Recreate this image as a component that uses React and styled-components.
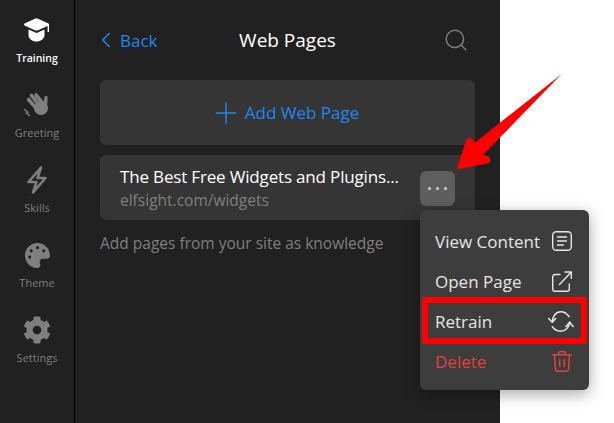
import styled, { createGlobalStyle } from "styled-components";
import { ChevronLeft, Plus, Search } from "lucide-react";
import { FaCog, FaPalette } from "react-icons/fa";

const GlobalStyle = createGlobalStyle`
  html, body {
    margin: 0;
    background: #fff;
    overflow: hidden;
  }
  body {
    font-family: "Open Sans", "Noto Sans", sans-serif;
  }
`;

function CapIcon() {
  return (
    <svg width="27" height="24" viewBox="0 0 27 24" fill="currentColor">
      <path d="M12.5 0.6 Q13.5 0.2 14.5 0.6 L25.5 5.6 Q26.8 6.5 25.5 7.4 L14.5 12.4 Q13.5 12.8 12.5 12.4 L1.5 7.4 Q0.2 6.5 1.5 5.6 Z" />
      <path d="M5.5 11.5 L13.5 15 L21.5 11.5 V17 C21.5 21 17.5 23.5 13.5 23.5 C9.5 23.5 5.5 21 5.5 17 Z" />
      <rect x="24.6" y="7" width="1.4" height="7" />
    </svg>
  );
}

function WaveIcon() {
  return (
    <svg width="28" height="26" viewBox="25 93 28 26" fill="none" stroke="currentColor" strokeLinecap="round">
      <path d="M33.5 96.5 L41 106 M38 96 L44.5 104 M30.5 100.5 L38 109" strokeWidth="3.6" />
      <path d="M48 98.5 L47.5 106" strokeWidth="3.4" />
      <circle cx="43" cy="109" r="7" fill="currentColor" stroke="none" />
      <path d="M26.5 110.5 L30 113.5 M28 114 L31.5 116.5" strokeWidth="1.4" />
    </svg>
  );
}

function BoltIcon() {
  return (
    <svg width="24" height="30" viewBox="26 165 24 30" fill="none" stroke="currentColor" strokeWidth="2.6" strokeLinejoin="round">
      <path d="M42 167.5 L29.5 182 H37.5 L34 192.5 L46.5 178 H38.5 Z" />
    </svg>
  );
}

function ContentIcon() {
  return (
    <svg width="20" height="20" viewBox="0 0 20 20" fill="none" stroke="currentColor" strokeWidth="1.4" strokeLinecap="round">
      <rect x="0.7" y="0.7" width="18.6" height="18.6" rx="3.5" />
      <path d="M5.5 6 H14.5 M5.5 10 H14.5 M5.5 14 H11.5" />
    </svg>
  );
}

function OpenIcon() {
  return (
    <svg width="20" height="21" viewBox="0 0 20 21" fill="none" stroke="currentColor" strokeWidth="1.4" strokeLinecap="round" strokeLinejoin="round">
      <path d="M8 3.5 H3 A2.3 2.3 0 0 0 0.7 5.8 V18 A2.3 2.3 0 0 0 3 20.3 H15 A2.3 2.3 0 0 0 17.3 18 V13" />
      <path d="M7.5 13.5 L19.3 1 M13 1 H19.3 V7.3" />
    </svg>
  );
}

function RetrainIcon() {
  return (
    <svg width="26" height="21" viewBox="0 0 26 21" fill="none" stroke="currentColor" strokeWidth="1.5" strokeLinecap="round" strokeLinejoin="round">
      <path d="M4.3 11 C4.5 5 8 0.8 12.7 0.8 C16 0.8 19 2.6 21 5.7" />
      <path d="M21.7 11 C21.5 16 17.5 20.2 12.7 20.2 C9.2 20.2 6.2 18.6 4.3 15.7" />
      <path d="M0.7 7.5 L4.3 11.3 L7.7 7.5 M18 15.5 L21.7 11.3 L25.2 15.5" />
    </svg>
  );
}

function TrashIcon() {
  return (
    <svg width="20" height="21" viewBox="0 0 20 21" fill="none" stroke="currentColor" strokeWidth="1.5" strokeLinecap="round" strokeLinejoin="round">
      <path d="M0.8 3.8 H19.2 M6.5 3.8 V2.5 Q6.5 0.8 8 0.8 H12 Q13.5 0.8 13.5 2.5 V3.8" />
      <path d="M2.5 3.8 L3.5 18 Q3.7 20.2 5.8 20.2 H14.2 Q16.3 20.2 16.5 18 L17.5 3.8" />
      <path d="M7.7 8.5 V15.5 M12.3 8.5 V15.5" />
    </svg>
  );
}

const navItems = [
  { label: "Training", icon: <CapIcon />, active: true },
  { label: "Greeting", icon: <WaveIcon /> },
  { label: "Skills", icon: <BoltIcon /> },
  { label: "Theme", icon: <FaPalette size={25} /> },
  { label: "Settings", icon: <FaCog size={28} /> },
];

function App() {
  return (
    <Page>
      <GlobalStyle />
      <Sidebar>
        {navItems.map((item) => (
          <NavItem key={item.label} $active={item.active}>
            <NavIcon>{item.icon}</NavIcon>
            {item.label}
          </NavItem>
        ))}
      </Sidebar>
      <Panel>
        <Header>
          <BackLink>
            <ChevronLeft size={26} strokeWidth={1.4} />
            Back
          </BackLink>
          <Title>Web Pages</Title>
          <SearchButton>
            <Search size={26} strokeWidth={1.4} />
          </SearchButton>
        </Header>
        <AddButton>
          <AddIcon size={34} strokeWidth={1} />
          Add Web Page
        </AddButton>
        <PageCard>
          <PageInfo>
            <PageTitle>The Best Free Widgets and Plugins...</PageTitle>
            <PageUrl>elfsight.com/widgets</PageUrl>
          </PageInfo>
          <MoreButton>
            <Dot />
            <Dot />
            <Dot />
          </MoreButton>
        </PageCard>
        <Hint>Add pages from your site as knowledge</Hint>
      </Panel>
      <Menu>
        <MenuItem>
          View Content
          <ContentIcon />
        </MenuItem>
        <MenuItem>
          Open Page
          <OpenIcon />
        </MenuItem>
        <MenuItem>
          Retrain
          <RetrainOffset>
            <RetrainIcon />
          </RetrainOffset>
          <Highlight />
        </MenuItem>
        <MenuItem $danger>
          Delete
          <TrashIcon />
        </MenuItem>
      </Menu>
      <Arrow viewBox="0 0 120 110">
        <path
          d="M111.7 4 L25 72.5 L23.5 70.5 Q20 65.5 16.5 69.5 L6.7 99.3 L38 93.5 Q41.5 92 40 88.5 Q39 86 36.5 85.8 L33 85 Z"
          fill="#fe0000"
        />
      </Arrow>
    </Page>
  );
}

const Page = styled.div`
  position: relative;
  display: flex;
  width: 614px;
  height: 423px;
  overflow: hidden;
`;

const Sidebar = styled.nav`
  display: flex;
  flex-direction: column;
  align-items: center;
  gap: 25px;
  box-sizing: border-box;
  width: 75px;
  padding-top: 15px;
  background: #212121;
  border-right: 1px solid #000;
`;

const NavItem = styled.div`
  display: flex;
  flex-direction: column;
  align-items: center;
  gap: 6px;
  height: 50px;
  font-size: ${(p) => (p.$active ? "10.5px" : "11px")};
  line-height: 14px;
  font-weight: ${(p) => (p.$active ? 600 : 400)};
  color: ${(p) => (p.$active ? "#fff" : "#7f7f7f")};
`;

const NavIcon = styled.div`
  display: flex;
  align-items: center;
  justify-content: center;
  height: 30px;
`;

const Panel = styled.main`
  display: flex;
  flex-direction: column;
  box-sizing: border-box;
  width: 425px;
  padding: 0 25px;
  background: #212121;
`;

const Header = styled.header`
  display: grid;
  grid-template-columns: 1fr auto 1fr;
  align-items: center;
  height: 80px;
`;

const BackLink = styled.div`
  display: flex;
  align-items: center;
  gap: 1px;
  margin-left: -7px;
  font-size: 17px;
  color: #1e88f0;
`;

const Title = styled.div`
  font-size: 19px;
  color: #fff;
`;

const SearchButton = styled.div`
  display: flex;
  justify-content: flex-end;
  margin-right: 6px;
  color: #7c7c7c;
`;

const AddButton = styled.div`
  display: flex;
  align-items: center;
  justify-content: center;
  gap: 2px;
  height: 65px;
  margin-bottom: 10px;
  border-radius: 6px;
  background: #353535;
  font-size: 17px;
  color: #1e88f0;
`;

const AddIcon = styled(Plus)`
  margin-left: -7px;
`;

const PageCard = styled.div`
  display: flex;
  align-items: center;
  justify-content: space-between;
  box-sizing: border-box;
  height: 65px;
  padding: 0 20px;
  border-radius: 6px;
  background: #353535;
`;

const PageInfo = styled.div`
  display: flex;
  flex-direction: column;
  gap: 2px;
`;

const PageTitle = styled.div`
  font-size: 17px;
  line-height: 23px;
  letter-spacing: -0.17px;
  color: #fff;
`;

const PageUrl = styled.div`
  font-size: 15.5px;
  line-height: 20px;
  color: #7f7f7f;
`;

const MoreButton = styled.div`
  display: flex;
  align-items: center;
  justify-content: center;
  gap: 5px;
  width: 35px;
  height: 35px;
  margin-top: 2px;
  border-radius: 6px;
  background: #5e5e5e;
`;

const Dot = styled.span`
  width: 3px;
  height: 3px;
  border-radius: 50%;
  background: #cfcfcf;
`;

const Hint = styled.div`
  margin-top: 12px;
  font-size: 15.5px;
  line-height: 22px;
  color: #7f7f7f;
`;

const Menu = styled.div`
  position: absolute;
  top: 210px;
  left: 420px;
  box-sizing: border-box;
  width: 169px;
  height: 180px;
  padding: 11px 0 9px;
  border-radius: 6px;
  background: #3d3d3d;
  box-shadow: 0 4px 16px rgba(0, 0, 0, 0.35);
`;

const MenuItem = styled.div`
  position: relative;
  display: flex;
  align-items: center;
  justify-content: space-between;
  height: 40px;
  padding: 0 17px 0 15px;
  font-size: 17px;
  color: ${(p) => (p.$danger ? "#e0433a" : "#e6e6e6")};
`;

const RetrainOffset = styled.span`
  display: flex;
  margin-right: -2px;
`;

const Highlight = styled.div`
  position: absolute;
  top: -4px;
  left: 2px;
  width: 165px;
  height: 47px;
  box-sizing: border-box;
  border: 6px solid #fe0000;
  border-radius: 3px;
`;

const Arrow = styled.svg`
  position: absolute;
  top: 70px;
  left: 450px;
  width: 120px;
  height: 110px;
`;

export default App;
